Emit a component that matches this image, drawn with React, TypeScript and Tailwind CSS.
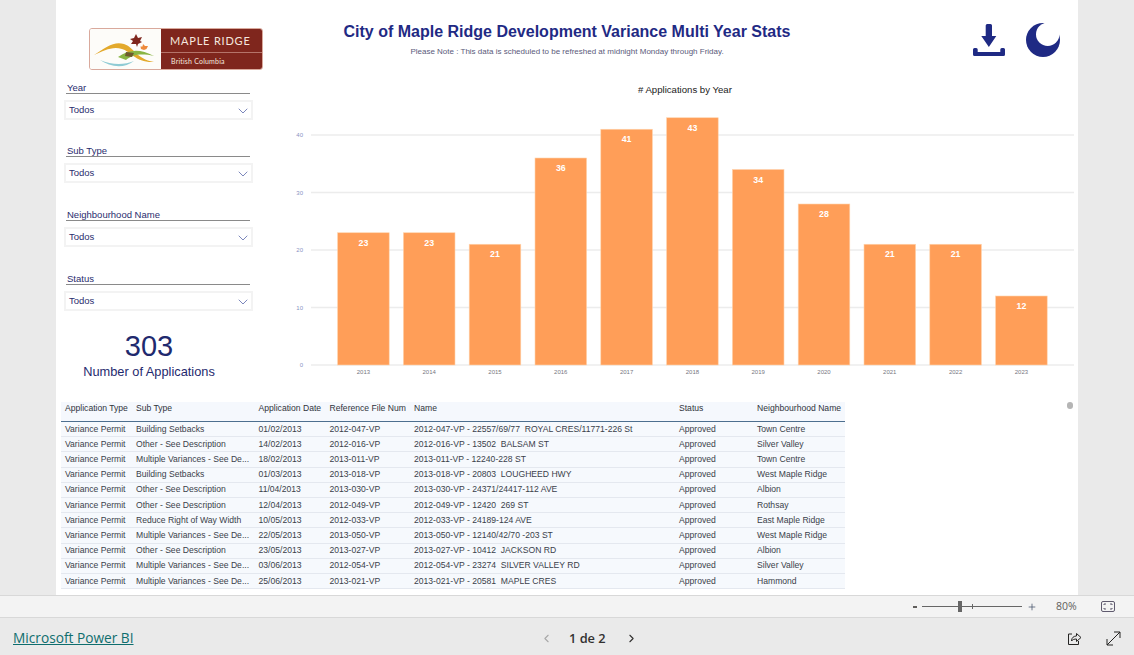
import React from "react";
import { ChevronDown, ChevronLeft, ChevronRight, Plus } from "lucide-react";

const FONT = "font-['Liberation_Sans',Arial,sans-serif]";
const NAVY = "#1f2a84";

const filters = ["Year", "Sub Type", "Neighbourhood Name", "Status"];
const bars: [string, number][] = [
  ["2013", 23], ["2014", 23], ["2015", 21], ["2016", 36], ["2017", 41], ["2018", 43],
  ["2019", 34], ["2020", 28], ["2021", 21], ["2022", 21], ["2023", 12],
];
const VM = "Multiple Variances - See De...";
const rows: string[][] = [
  ["Building Setbacks", "01/02/2013", "2012-047-VP", "2012-047-VP - 22557/69/77  ROYAL CRES/11771-226 St", "Town Centre"],
  ["Other - See Description", "14/02/2013", "2012-016-VP", "2012-016-VP - 13502  BALSAM ST", "Silver Valley"],
  [VM, "18/02/2013", "2013-011-VP", "2013-011-VP - 12240-228 ST", "Town Centre"],
  ["Building Setbacks", "01/03/2013", "2013-018-VP", "2013-018-VP - 20803  LOUGHEED HWY", "West Maple Ridge"],
  ["Other - See Description", "11/04/2013", "2013-030-VP", "2013-030-VP - 24371/24417-112 AVE", "Albion"],
  ["Other - See Description", "12/04/2013", "2012-049-VP", "2012-049-VP - 12420  269 ST", "Rothsay"],
  ["Reduce Right of Way Width", "10/05/2013", "2012-033-VP", "2012-033-VP - 24189-124 AVE", "East Maple Ridge"],
  [VM, "22/05/2013", "2013-050-VP", "2013-050-VP - 12140/42/70 -203 ST", "West Maple Ridge"],
  ["Other - See Description", "23/05/2013", "2013-027-VP", "2013-027-VP - 10412  JACKSON RD", "Albion"],
  [VM, "03/06/2013", "2012-054-VP", "2012-054-VP - 23274  SILVER VALLEY RD", "Silver Valley"],
  [VM, "25/06/2013", "2013-021-VP", "2013-021-VP - 20581  MAPLE CRES", "Hammond"],
];
const COLS = "grid grid-cols-[71px_122.5px_71px_84.5px_265px_78px_88px] pl-[4px]";

function Logo() {
  return (
    <div className="flex h-[42px] w-[174px] overflow-hidden rounded-[3px] border border-[#d9a99c]">
      <div className="h-full w-[71px] bg-[#fdfcf9]">
        <svg viewBox="0 0 71 40" className="h-full w-full">
          <path d="M4 26 C16 18 24 12 34 15 C44 18 46 30 64 33 C46 34 40 22 32 20 C22 17 14 22 4 26Z" fill="#e3a92c" />
          <path d="M28 28 C40 20 50 20 64 27 C50 24 42 26 36 31 Z" fill="#8ab544" />
          <path d="M10 31 C22 36 34 36 44 32 C34 40 20 38 10 31Z" fill="#8fcbd4" />
          <path d="M36 23 L44 24 L42 28 L35 27 Z" fill="#6f5a2c" />
          <path d="M46 5 L48 9 L52 8 L50 12 L52 13 L48 15 L47 18 L46 15 L41 15 L43 12 L40 10 L44 9 Z" fill="#7f261d" />
          <path d="M53 15 L55 17 L58 17 L56.500 20 L54 21 L51 20 L50.500 17.500 L52.500 17.500 Z" fill="#ee8a3c" />
        </svg>
      </div>
      <div className="flex h-full flex-1 flex-col bg-[#7f261d] text-[#f4e6df]">
        <div className="flex h-[24px] items-center border-b border-[#b5746a] pl-[9px] pt-[1px] font-['Lato',sans-serif] text-[11px] tracking-[0.8px]">MAPLE RIDGE</div>
        <div className="flex flex-1 items-center pl-[10px] font-['Lato',sans-serif] text-[7px] tracking-[0.2px]">British Columbia</div>
      </div>
    </div>
  );
}

function Filter({ label, first }: { label: string; first: boolean }) {
  return (
    <div className={first ? "h-[63px]" : "h-[64px]"}>
      <div className="ml-[2px] h-[12px] w-[184px] border-b border-[#8a8a8a] pl-[1px] text-[9.500px] leading-[11px] text-[#2a2d6e]">{label}</div>
      <div className="mt-[6px] flex h-[20px] items-center justify-between border-2 border-[#f3f3f3] pl-[3px] text-[9.500px] text-[#2a2d6e]">
        <span>Todos</span>
        <ChevronDown size={16} strokeWidth={1} className="mt-[2px] text-[#3a4a9a]" />
      </div>
    </div>
  );
}

function Chart() {
  const y = (v: number) => 365 - v * 5.75;
  return (
    <svg viewBox="256 100 822 285" className="h-[285px] w-[822px]" style={{ fontFamily: "'Liberation Sans', Arial, sans-serif" }}>
      {[0, 10, 20, 30, 40].map((v) => (
        <g key={v}>
          <line x1={311} x2={1074} y1={y(v)} y2={y(v)} stroke="#ececec" strokeWidth={1.4} />
          <text x={303} y={y(v) + 2} fontSize={6} textAnchor="end" fill="#8a93c4">{v}</text>
        </g>
      ))}
      {bars.map(([yr, v], i) => {
        const x = 337.6 + i * 65.8;
        return (
          <g key={yr}>
            <rect x={x} y={y(v)} width={51.6} height={v * 5.75} fill="#ff9e58" stroke="#ffd3ad" strokeWidth={0.6} />
            <text x={x + 25.8} y={y(v) + 13} fontSize={8.800} fontWeight={700} textAnchor="middle" fill="#fff">{v}</text>
            <text x={x + 25.8} y={374} fontSize={6} textAnchor="middle" fill="#77777f">{yr}</text>
          </g>
        );
      })}
    </svg>
  );
}

function Download() {
  return (
    <svg width="32" height="32" viewBox="0 0 32 32" fill={NAVY}>
      <path d="M12.700 1.500 a1.500 1.500 0 0 1 1.500-1.500 h3.300 a1.500 1.500 0 0 1 1.500 1.500 V12 H23.300 L15.850 23 L8.300 12 H12.700 Z" />
      <path d="M0 25.500 a1.500 1.500 0 0 1 1.500-1.500 h1.700 a1.500 1.500 0 0 1 1.500 1.500 V28 H27.300 V25.500 a1.500 1.500 0 0 1 1.500-1.500 h1.700 A1.500 1.500 0 0 1 32 25.500 V30.500 a1.500 1.500 0 0 1-1.500 1.500 H1.500 A1.500 1.500 0 0 1 0 30.500 Z" />
    </svg>
  );
}

function Moon() {
  return (
    <svg width="34" height="34" viewBox="0 0 34 34">
      <circle cx="17" cy="17" r="17" fill={NAVY} />
      <circle cx="21.700" cy="11.300" r="11.700" fill="#fff" />
      <rect x="22" y="0" width="12" height="6" fill="#fff" />
    </svg>
  );
}

export default function App() {
  return (
    <div className={`flex h-[655px] w-[1134px] flex-col overflow-hidden bg-[#eaeaea] ${FONT}`}>
      <div className="relative h-[595px] shrink-0">
        <div className="ml-[56px] flex h-full w-[1022px] flex-col bg-white">
          <div className="flex h-[396px] shrink-0">
            <div className="w-[200px] shrink-0 pl-[8px]">
              <div className="ml-[25px] mt-[28px]"><Logo /></div>
              <div className="mt-[12px] w-[189px]">
                {filters.map((f, i) => <Filter key={f} label={f} first={i === 0} />)}
              </div>
              <div className="w-[170px] text-center text-[#1f2a6e]">
                <div className="-mt-[8px] text-[29px] leading-[34px]">303</div>
                <div className="mt-[1px] whitespace-nowrap text-[12.800px] leading-[16px]">Number of Applications</div>
              </div>
            </div>
            <div className="flex-1">
              <div className="relative h-[80px]">
                <div className="pr-[200px] pt-[22px] text-center">
                  <h1 className="whitespace-nowrap text-[16px] font-bold leading-[20px] text-[#1f2a84]">City of Maple Ridge Development Variance Multi Year Stats</h1>
                  <p className="mt-[4px] text-[8px] leading-[12px] text-[#5a5a7a]">Please Note : This data is scheduled to be refreshed at midnight Monday through Friday.</p>
                </div>
                <div className="absolute right-[18px] top-[23px] flex items-center gap-[21px]">
                  <Download />
                  <Moon />
                </div>
              </div>
              <div className="pl-[382px] text-[9.600px] leading-[20px] text-[#222]">
                <span className="whitespace-nowrap"># Applications by Year</span>
              </div>
              <Chart />
            </div>
          </div>
          <div className="ml-[5px] mt-[6px] w-[784px] text-[8.600px] text-[#3a3f4a]">
            <div className={`${COLS} h-[19px] items-start bg-[#f5f8fd] pt-[1px] leading-[11px] text-[#30343c]`}>
              {["Application Type", "Sub Type", "Application Date", "Reference File Num", "Name", "Status", "Neighbourhood Name"].map((h) => (
                <div key={h} className="whitespace-nowrap">{h}</div>
              ))}
            </div>
            <div className="border-t border-[#4d6f8f]">
              {rows.map((r) => (
                <div key={r[2] + r[1]} className={`${COLS} h-[15.200px] items-center border-b border-[#e4e8ef] bg-[#f6f9fd]`}>
                  <div>Variance Permit</div>
                  <div className="whitespace-nowrap">{r[0]}</div>
                  <div>{r[1]}</div>
                  <div>{r[2]}</div>
                  <div className="whitespace-pre">{r[3]}</div>
                  <div>Approved</div>
                  <div className="whitespace-nowrap">{r[4]}</div>
                </div>
              ))}
            </div>
          </div>
        </div>
        <div className="absolute left-[1067px] top-[402px] h-[7px] w-[6px] rounded-full bg-[#b5b5b5]" />
      </div>
      <div className="flex h-[23px] shrink-0 items-center justify-end border-y border-[#d8d8d8] bg-[#f3f3f3] pr-[19px] text-[#605e5c]">
        <div className="h-[2px] w-[4px] bg-[#605e5c]" />
        <div className="relative ml-[5px] h-[1px] w-[100px] bg-[#666]">
          <div className="absolute left-[36px] top-[-5px] h-[11px] w-[4px] bg-[#666]" />
          <div className="absolute left-[50px] top-[-2px] h-[5px] w-[1px] bg-[#666]" />
        </div>
        <Plus size={10} strokeWidth={1.800} className="ml-[5px] text-[#44506a]" />
        <span className="ml-[19px] w-[26px] font-['Open_Sans',sans-serif] text-[10.500px]">80%</span>
        <svg width="14" height="11" viewBox="0 0 14 11" fill="none" stroke="#5f5a6e" strokeWidth="1" className="ml-[19px]">
          <rect x="0.500" y="0.500" width="13" height="10" rx="1.500" />
          <path d="M3 4 V3 H5 M9 3 H11 V4 M3 7 V8 H5 M9 8 H11 V7" />
        </svg>
      </div>
      <div className="relative flex flex-1 items-center justify-between px-[13px] pt-[4px]">
        <a href="#" className="font-['Open_Sans',sans-serif] text-[13.700px] font-medium text-[#0f6e6e] underline">Microsoft Power BI</a>
        <div className="absolute left-[540px] top-[11px] flex items-center text-[#323130]">
          <ChevronLeft size={13} className="text-[#a8a8a8]" />
          <span className="ml-[16px] mr-[19px] font-['Open_Sans',sans-serif] text-[12.800px] font-semibold">1 de 2</span>
          <ChevronRight size={13} />
        </div>
        <div className="flex items-center gap-[24px]">
          <svg width="15" height="15" viewBox="0 0 15 15" fill="none" stroke="#252423" strokeWidth="1">
            <path d="M5 3 H1.500 V13.500 H11.500 V10" />
            <path d="M4.500 10 C4.500 6.500 7 5 9.500 5 V2.500 L14 6.500 L9.500 10.500 V8 C7.500 8 5.500 8.500 4.500 10Z" />
          </svg>
          <svg width="15" height="15" viewBox="0 0 15 15" fill="none" stroke="#252423" strokeWidth="1">
            <path d="M1 14 L14 1 M8 1 H14 V7 M1 8 V14 H7" />
          </svg>
        </div>
      </div>
    </div>
  );
}
